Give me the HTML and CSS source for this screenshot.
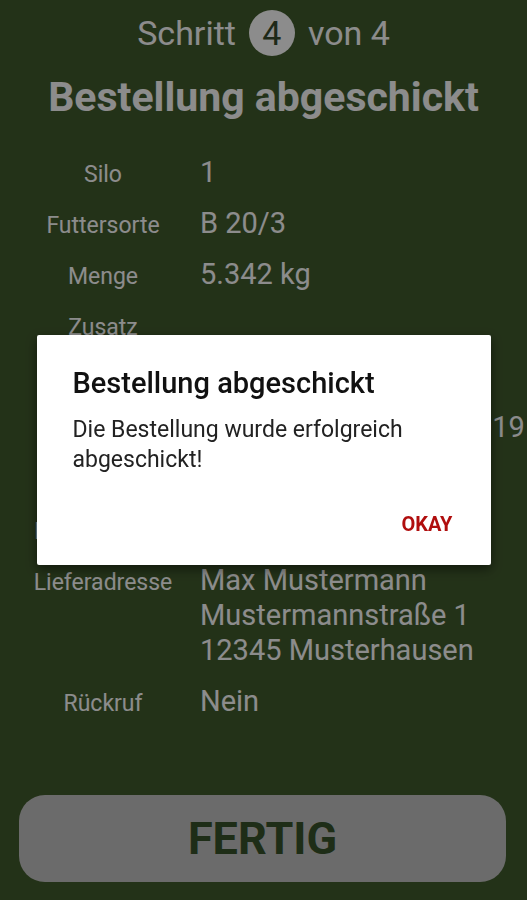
FILE: index.html
```html
<!DOCTYPE html>
<html lang="de">
<head>
  <meta charset="UTF-8" />
  <title>Bestellung abgeschickt</title>
  <link rel="stylesheet" href="styles.css">
</head>
<body>
  <div class="screen">
    <div class="schritt">Schritt <span class="schritt-nr">4</span> von 4</div>
    <h1 class="titel">Bestellung abgeschickt</h1>

    <div class="details">
      <div class="label">Silo</div>
      <div class="wert">1</div>
      <div class="label">Futtersorte</div>
      <div class="wert">B 20/3</div>
      <div class="label">Menge</div>
      <div class="wert">5.342 kg</div>
      <div class="label">Zusatz</div>
      <div class="wert"></div>
      <div class="label">Lieferart</div>
      <div class="wert">Standard</div>
      <div class="label">Liefertermin</div>
      <div class="wert">11.03.2019 – 15.03.2019</div>
      <div class="label">Uhrzeit</div>
      <div class="wert">vormittags</div>
      <div class="label">Lieferwunsch</div>
      <div class="wert">keine</div>
      <div class="label">Lieferadresse</div>
      <div class="wert">Max Mustermann<br>Mustermannstraße 1<br>12345 Musterhausen</div>
      <div class="label">Rückruf</div>
      <div class="wert">Nein</div>
    </div>

    <button class="fertig">FERTIG</button>
  </div>

  <div class="scrim">
    <div class="dialog">
      <h2>Bestellung abgeschickt</h2>
      <p>Die Bestellung wurde erfolgreich abgeschickt!</p>
      <div class="dialog-aktionen">
        <button class="okay">OKAY</button>
      </div>
    </div>
  </div>
</body>
</html>
```

FILE: styles.css
```css
body {
  font-family: Roboto, "Liberation Sans", sans-serif;
  margin: 0; padding: 0;
  background-color: #415b2d;
  color: #fff;
}
.screen {
  height: 900px;
  display: flex;
  flex-direction: column;
  overflow: hidden;
}
.schritt {
  display: flex;
  justify-content: center;
  align-items: center;
  gap: 13px;
  padding-top: 10px;
  font-size: 34px;
  height: 46px;
}
.schritt-nr {
  width: 46px;
  height: 46px;
  border-radius: 50%;
  background: #fff;
  color: #374c2c;
  display: flex;
  justify-content: center;
  align-items: center;
}
.titel {
  text-align: center;
  font-size: 41px;
  font-weight: bold;
  line-height: 48px;
  margin: 17px 0 0 0;
}
.details {
  display: grid;
  grid-template-columns: 186px 1fr;
  column-gap: 4px;
  row-gap: 16px;
  padding-left: 10px;
  margin-top: 34px;
  align-items: start;
  white-space: nowrap;
}
.label {
  text-align: center;
  font-size: 23px;
  line-height: 31px;
  padding-top: 4px;
}
.wert {
  font-size: 29px;
  line-height: 35px;
  min-height: 35px;
}
button.fertig {
  margin: auto 21px 18px 19px;
  height: 87px;
  border: none;
  border-radius: 26px;
  background-color: #c3c3c3;
  color: #38522a;
  font-family: inherit;
  font-size: 45px;
  font-weight: bold;
}

.scrim {
  position: fixed;
  top: 0; left: 0; right: 0; bottom: 0;
  background: rgba(0,0,0,0.45);
  display: flex;
  justify-content: center;
  align-items: center;
}
.dialog {
  width: 454px;
  height: 230px;
  box-sizing: border-box;
  background: #fff;
  border-radius: 2px;
  box-shadow: 0 4px 12px rgba(0,0,0,0.5);
  padding: 32px 36px 0 36px;
  color: #111;
  display: flex;
  flex-direction: column;
}
.dialog h2 {
  margin: 0;
  font-size: 29px;
  font-weight: 500;
  line-height: 32px;
}
.dialog p {
  margin: 16px 0 0 0;
  font-size: 23px;
  line-height: 30px;
  color: #222;
}
.dialog-aktionen {
  margin-top: auto;
  display: flex;
  justify-content: flex-end;
  padding-bottom: 29px;
}
button.okay {
  background: none;
  border: none;
  padding: 0;
  margin-right: 2px;
  font-family: inherit;
  font-size: 20px;
  font-weight: bold;
  color: #b00e0e;
}
```
